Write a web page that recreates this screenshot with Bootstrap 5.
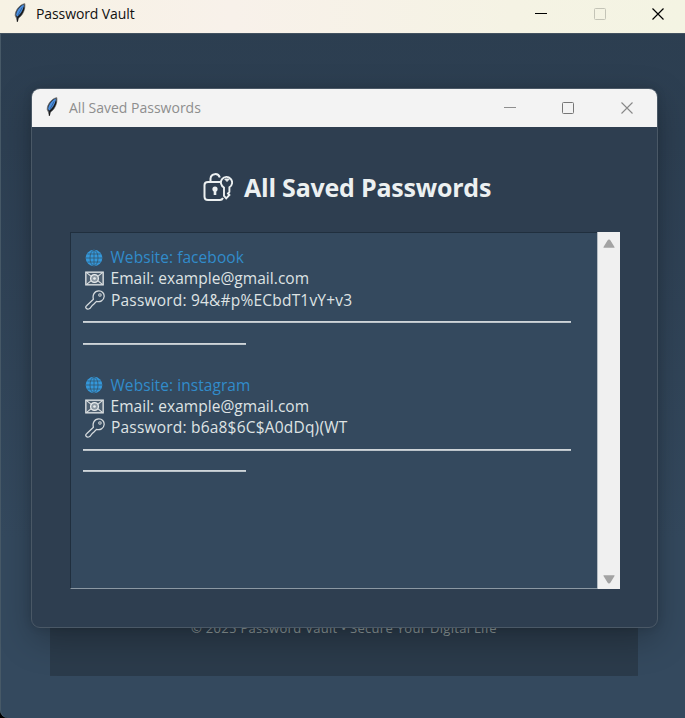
<!DOCTYPE html>
<html lang="en">
<head>
<meta charset="utf-8">
<meta name="viewport" content="width=device-width, initial-scale=1">
<title>Password Vault</title>
<link href="https://cdn.jsdelivr.net/npm/bootstrap@5.3.0/dist/css/bootstrap.min.css" rel="stylesheet">
<style>
body{font-family:"Open Sans","Noto Sans",sans-serif;background:#000;}
svg{display:block;flex:none}
.main-win{height:718px;background:linear-gradient(#2c3e50 0,#2d3f52 20%,#34495e 75%,#34495e);border-radius:0 0 0 8px;box-shadow:inset 1px 0 #475967}
.main-bar{height:33px;background:linear-gradient(90deg,#f7f2e4 0,#f8f1ea 34%,#f5f3e4 75%,#f4f4e3);padding:0 0 6px 13px;box-shadow:0 1px #435260}
.bar-title{font-size:14px;line-height:20px;white-space:nowrap}
.main-bar .bar-title{color:#111;margin:1px 0 0 9px;letter-spacing:-.1px}
.main-bar .feather{margin-top:-2px}
.ctl{width:58.5px}
.main-ctls{margin-right:8px}
.main-ctls .ctl:last-child{width:25px}
.child-ctls{margin-right:24px}
.child-ctls .ctl:nth-child(2){width:59px;margin-left:-.5px}
.child-ctls .ctl:last-child{width:12px}
.back-panel{width:588px;height:540px;background:#2b3b4b;margin:0 auto 42px 50px}
.back-foot{color:#8b9899;font-size:13px;font-weight:500;line-height:18px;letter-spacing:.3px;padding-bottom:39px;white-space:nowrap}
.child-win{left:31px;top:88px;width:627px;height:540px;border:1px solid #4a5866;border-radius:9px;background:#2e3e50;box-shadow:0 12px 34px rgba(0,0,0,.25),0 0 8px rgba(0,0,0,.12)}
.child-bar{height:38px;background:#f3f3f3;padding-left:13px}
.child-bar .bar-title{color:#8e8e8e;margin-left:10px}
.child-bar .feather{margin-top:-3px}
.page-title{color:#ecf0f1;font-size:25px;font-weight:700;line-height:36px;letter-spacing:-.22px;margin:42px 0 0 171px;gap:11px}
.page-title span{white-space:nowrap}
.vault-box{margin:27px 38px 0 37.5px;height:357px;width:550px}
.vault-text{background:#34495e;border:solid;border-width:1px 0 1px 1px;border-color:#202f3e #202f3e #8b98a3 #202f3e;padding:14px 0 0 12.5px;color:#dfe3e4;font-size:15.5px}
.vault-text .line{height:21.25px;line-height:21.25px;white-space:nowrap}
.vault-text svg{margin:0 6px 0 2px}
.vault-text .globe{margin-right:7.5px}
.vault-text .mail{margin-right:6.5px}
.site{color:#318ccb;letter-spacing:.06px}
.mail-text{letter-spacing:.04px}
.pass-text{letter-spacing:.2px}
.rule-long,.rule-short{height:2px;background:linear-gradient(#d9dee1,#b0bac2);margin-top:2px}
.rule-long{width:488px}.rule-short{width:163px}
.scroller{width:22.500px;background:#f0f0f0;border-left:1px solid #b4bcc3;padding:7px 0 5px}
</style>
<script src="https://cdn.jsdelivr.net/npm/bootstrap@5.3.0/dist/js/bootstrap.bundle.min.js"></script>
</head>
<body class="m-0 overflow-hidden">
<svg width="0" height="0" class="position-absolute" aria-hidden="true">
<defs>
<symbol id="feather" viewBox="0 0 14 20"><path d="M11.800 .7C7.200 1.200 2.300 6.800 2.200 12.300l1.200 2.800 1 3.800.7-3.600C9.400 13 12.600 6.500 11.800.7Z" fill="#27313d" stroke="#6a6a6a" stroke-width=".8"/><path d="M10.900 1.800C7 3 3.600 8 3.100 12l1.300 1.500C7.200 11 10.500 7 10.900 1.800Z" fill="#4b8fe0"/><path d="M11 4.500C10.500 8 8 12 5 14.200l-.6 4.300" fill="none" stroke="#151515" stroke-width="1.100"/><path d="M9.200 4.500 5 12" fill="none" stroke="#24476f" stroke-width=".6"/></symbol>
<symbol id="globe" viewBox="0 0 18 18"><circle cx="9" cy="9" r="8.300" fill="#3498db"/><g fill="none" stroke="#34566f" stroke-width=".8"><ellipse cx="9" cy="9" rx="4" ry="7.800"/><path d="M9 1v16M1 9h16M2.500 5h13M2.500 13h13"/></g></symbol>
<symbol id="mail" viewBox="0 0 18 14"><rect x=".8" y="1" width="16.400" height="12" fill="#4f6172" stroke="#dfe3e4" stroke-width="1.300"/><path d="m1.500 1.500 5 4M1.500 12.500l5-4M16.500 1.500l-5 4M16.500 12.500l-5-4" fill="none" stroke="#dfe3e4"/><circle cx="9" cy="7" r="3.700" fill="#8a97a2" stroke="#e8eced" stroke-width="1.200"/><circle cx="9" cy="7" r="1.300" fill="#e8eced"/></symbol>
<symbol id="key" viewBox="0 0 19 19"><path d="M8 8.800C6.900 5 8.800 1 13 .9c3.200-.1 5.400 2.200 5.200 5.200-.3 4-4 5.800-7.300 4.700L8.500 13.300 6.600 15 4.500 17.600Q2.300 18.900 1 17.300.2 16 1.500 15Z" fill="none" stroke="#d5dadd" stroke-width="1.200" stroke-linejoin="round"/><circle cx="14.200" cy="4.700" r="1.200" fill="none" stroke="#d5dadd"/></symbol>
</defs>
</svg>
<div class="main-win position-relative d-flex flex-column overflow-hidden">
  <header class="main-bar d-flex align-items-center flex-shrink-0">
    <svg class="feather" width="14" height="20"><use href="#feather"/></svg>
    <span class="bar-title">Password Vault</span>
    <div class="main-ctls d-flex ms-auto">
      <div class="ctl"><svg width="12" height="12"><path d="M0 5.500h12" stroke="#000"/></svg></div>
      <div class="ctl"><svg width="12" height="12"><rect x=".5" y=".5" width="11" height="11" rx="1" fill="none" stroke="#c4c4b7"/></svg></div>
      <div class="ctl"><svg width="12" height="12"><path d="m.5.5 11 11m0-11-11 11" stroke="#000" stroke-width="1.200"/></svg></div>
    </div>
  </header>
  <main class="back-panel d-flex flex-column justify-content-end align-items-center mt-auto">
    <div class="back-foot">© 2025 Password Vault • Secure Your Digital Life</div>
  </main>
  <section class="child-win position-absolute overflow-hidden">
    <header class="child-bar d-flex align-items-center">
      <svg class="feather" width="14" height="20"><use href="#feather"/></svg>
      <span class="bar-title">All Saved Passwords</span>
      <div class="child-ctls d-flex ms-auto">
        <div class="ctl"><svg width="12" height="12"><path d="M0 5.500h12" stroke="#8e8e8e"/></svg></div>
        <div class="ctl"><svg width="12" height="12"><rect x=".5" y=".5" width="11" height="11" rx="1" fill="none" stroke="#777"/></svg></div>
        <div class="ctl"><svg width="12" height="12"><path d="m.5.5 11 11m0-11-11 11" stroke="#888" stroke-width="1.100"/></svg></div>
      </div>
    </header>
    <h1 class="page-title d-flex align-items-center mb-0">
      <svg width="30" height="30" viewBox="0 0 30 30" fill="none" stroke="#ecf0f1" stroke-width="2"><path d="M20 26q-1 2-3 2H5q-3.500 0-3.500-3.500V13Q1.500 10 5 10H18M7.500 10V6.500a4.800 5 0 0 1 9.300-1"/><circle cx="12" cy="17" r="2.600" fill="#ecf0f1" stroke="none"/><path d="M12 17v6" stroke-width="2.600"/><path d="M21 15.500a5.600 5.600 0 1 1 5.400-.2V20l-1.400 1.500 1.400 1.500-3.200 3.300-2.200-2.500Z" stroke-width="1.900"/><path d="m21.700 7 2.300 2.500L26.300 7Z" fill="#ecf0f1" stroke-width="1"/></svg>
      <span>All Saved Passwords</span>
    </h1>
    <div class="vault-box d-flex">
      <div class="vault-text flex-grow-1">
        <div class="line site d-flex align-items-center"><svg class="globe" width="18" height="18"><use href="#globe"/></svg><span>Website: facebook</span></div>
        <div class="line d-flex align-items-center"><svg class="mail" width="19" height="15"><use href="#mail"/></svg><span class="mail-text">Email: example@gmail.com</span></div>
        <div class="line d-flex align-items-center"><svg width="20" height="20"><use href="#key"/></svg><span class="pass-text">Password: 94&amp;#p%ECbdT1vY+v3</span></div>
        <div class="line d-flex align-items-center"><div class="rule-long"></div></div>
        <div class="line d-flex align-items-center"><div class="rule-short"></div></div>
        <div class="line"></div>
        <div class="line site d-flex align-items-center"><svg class="globe" width="18" height="18"><use href="#globe"/></svg><span>Website: instagram</span></div>
        <div class="line d-flex align-items-center"><svg class="mail" width="19" height="15"><use href="#mail"/></svg><span class="mail-text">Email: example@gmail.com</span></div>
        <div class="line d-flex align-items-center"><svg width="20" height="20"><use href="#key"/></svg><span class="pass-text">Password: b6a8$6C$A0dDq)(WT</span></div>
        <div class="line d-flex align-items-center"><div class="rule-long"></div></div>
        <div class="line d-flex align-items-center"><div class="rule-short"></div></div>
      </div>
      <div class="scroller d-flex flex-column justify-content-between align-items-center">
        <svg width="12" height="9"><path d="M6 .5q1 0 1.500 1L11.500 8v.7H.5V8l4-6.500q.5-1 1.500-1Z" fill="#a3a3a3"/></svg>
        <svg width="12" height="9"><path d="M6 8.500q-1 0-1.500-1L.5 1V.3h11V1l-4 6.500q-.5 1-1.500 1Z" fill="#a3a3a3"/></svg>
      </div>
    </div>
  </section>
</div>
</body>
</html>
